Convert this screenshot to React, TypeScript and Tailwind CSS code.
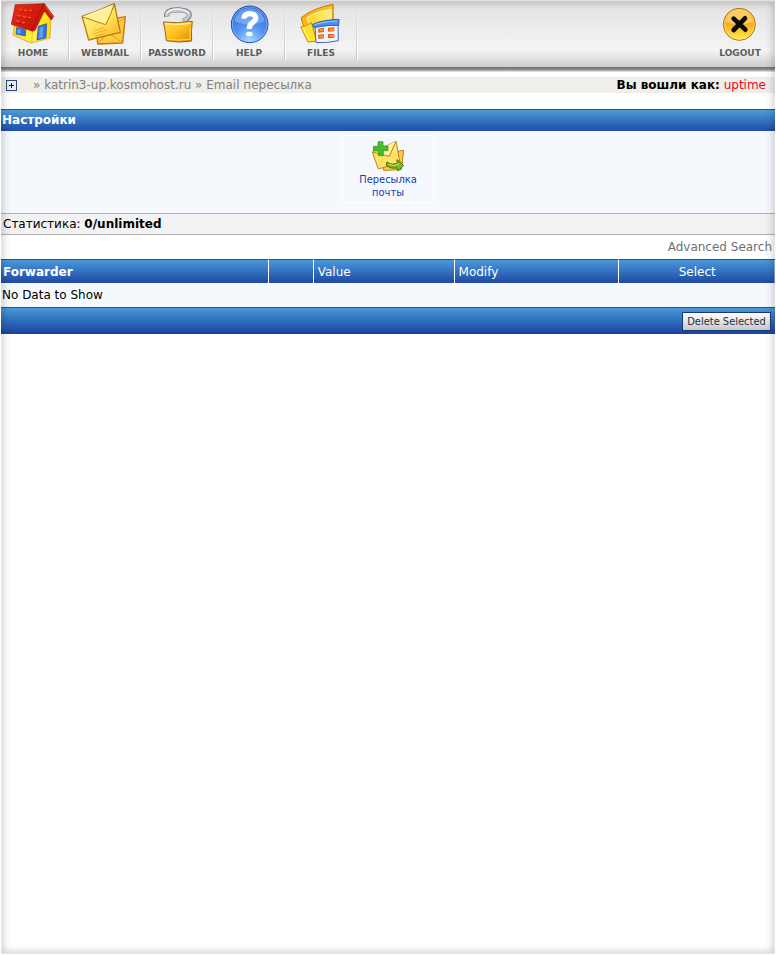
import type { ReactNode } from 'react';

function HomeIcon() {
  return (
    <svg viewBox="27 6 144 132" className="w-12 h-11" aria-hidden="true">
      <defs>
        <linearGradient id="roof" x1="0" y1="0" x2="1" y2="1">
          <stop offset="0" stopColor="#e8331a" />
          <stop offset="0.5" stopColor="#d81e0e" />
          <stop offset="1" stopColor="#b00d06" />
        </linearGradient>
        <linearGradient id="wall" x1="0" y1="0" x2="1" y2="0">
          <stop offset="0" stopColor="#ffe21a" />
          <stop offset="0.6" stopColor="#fff04a" />
          <stop offset="1" stopColor="#ffdc00" />
        </linearGradient>
      </defs>
      <path d="M44 72L39 105L93 129L150 114L152 52L133 32L98 88Z" fill="url(#wall)" stroke="#c9971a" strokeWidth="2" strokeLinejoin="round" />
      <path d="M98 92L95 127" stroke="#e8bd00" strokeWidth="2" />
      <path d="M50 82L77 89L76 108L48 102Z" fill="#2f6fe0" stroke="#2450a4" strokeWidth="2" />
      <path d="M53 86L64 89L62 102L51 99Z" fill="#5b9bf5" />
      <path d="M115 79L140 71L138 113L111 120Z" fill="#3577dc" stroke="#20499c" strokeWidth="2" />
      <path d="M119 83L130 80L128 112L117 115Z" fill="#5ea2f5" />
      <path d="M46 14L133 11L96 93L34 73Z" fill="url(#roof)" stroke="#a8140b" strokeWidth="2" strokeLinejoin="round" />
      <path d="M133 11L161 49L154 60L133 33L105 91L96 94L122 30Z" fill="#cf1b0e" stroke="#98100a" strokeWidth="2" strokeLinejoin="round" />
      <path d="M135 17L156 47" stroke="#f0573a" strokeWidth="3" />
      <path d="M55 30q6 10 14 2q5 10 14 2q5 9 14 1q5 8 13 0M48 49q7 10 16 3q6 10 16 2q6 9 15 1M43 66q8 9 17 3q7 9 16 3" fill="none" stroke="#a91008" strokeWidth="2" />
      <path d="M58 26q5 8 8 1M73 28q5 8 8 1M88 29q5 7 7 1M52 44q6 8 9 1M69 48q6 8 9 1M85 50q5 7 7 1M49 61q5 6 8 1M66 65q5 6 8 1" stroke="#f9522e" strokeWidth="4" fill="none" />
    </svg>
  );
}

function MailIcon() {
  return (
    <svg viewBox="243 6 144 132" className="w-12 h-11" aria-hidden="true">
      <defs>
        <linearGradient id="mail" x1="0" y1="0" x2="1" y2="1">
          <stop offset="0" stopColor="#fff5a0" />
          <stop offset="0.55" stopColor="#ffe358" />
          <stop offset="1" stopColor="#ffab22" />
        </linearGradient>
      </defs>
      <g stroke="#b87b0c" strokeWidth="4" strokeLinejoin="round">
        <path d="M288 73Q326 59 376 50L368 129Q328 131 293 132Z" fill="#ffc940" />
        <path d="M292 130L326 100L368 128M340 78L376 52" fill="none" stroke="#e09c24" strokeWidth="3" />
        <path d="M246 49Q294 34 343 11L361 97Q318 107 266 120Q258 88 246 49Z" fill="url(#mail)" />
        <path d="M247 50Q284 64 317 74Q333 44 343 12" fill="#fff09a" strokeWidth="3" />
        <path d="M266 118L292 68M361 96L322 67" fill="none" stroke="#f2c850" strokeWidth="2" />
      </g>
      <path d="M284 92L311 83M280 101L322 89M285 109L314 101" stroke="#f5a52d" strokeWidth="3" />
      <path d="M253 50Q296 37 337 18" stroke="#fffbd0" strokeWidth="3" fill="none" />
    </svg>
  );
}

function PasswordIcon() {
  return (
    <svg viewBox="39 6 144 132" className="w-12 h-11" aria-hidden="true">
      <defs>
        <linearGradient id="lock" x1="0" y1="0" x2="1" y2="1">
          <stop offset="0" stopColor="#ffd84c" />
          <stop offset="0.45" stopColor="#ffc424" />
          <stop offset="1" stopColor="#dc8700" />
        </linearGradient>
      </defs>
      <path d="M80 50Q77 29 112 29Q148 30 148 45Q148 53 130 64" fill="none" stroke="#77777f" strokeWidth="15" />
      <path d="M80 49Q78 30 112 30Q147 31 147 45Q146 53 130 63" fill="none" stroke="#c3c3cc" strokeWidth="11" />
      <path d="M80 42Q86 27 114 27Q141 29 147 41" fill="none" stroke="#f5f5fb" strokeWidth="4" />
      <path d="M70 66Q111 71 157 64Q153 91 155 123Q118 130 79 122Q76 91 70 66Z" fill="url(#lock)" stroke="#9d670b" strokeWidth="3" strokeLinejoin="round" />
      <path d="M75 71Q112 76 151 69" stroke="#fff1a0" strokeWidth="4" fill="none" />
      <path d="M82 117Q116 123 150 118L151 83" stroke="#ffde5c" strokeWidth="3" fill="none" />
    </svg>
  );
}

function HelpIcon() {
  return (
    <svg viewBox="255 6 144 132" className="w-12 h-11" aria-hidden="true">
      <defs>
        <radialGradient id="help" cx="0.5" cy="0.95" r="0.9">
          <stop offset="0" stopColor="#a8dcff" />
          <stop offset="0.45" stopColor="#5496f2" />
          <stop offset="1" stopColor="#2f68d8" />
        </radialGradient>
      </defs>
      <circle cx="329" cy="73" r="55" fill="url(#help)" stroke="#2449a6" strokeWidth="3" />
      <circle cx="329" cy="73" r="52" fill="none" stroke="#9cc6fa" strokeWidth="2" />
      <path d="M284 64Q290 27 329 24Q368 27 374 64Q328 82 284 64Z" fill="#9bc6fb" opacity="0.5" />
      <path d="M312 56Q312 41 330 41Q349 43 347 56Q345 63 336 69Q328 74 328 87" fill="none" stroke="#fff" strokeWidth="16" />
      <ellipse cx="328" cy="102" rx="10" ry="7" fill="#fff" />
    </svg>
  );
}

function FilesIcon() {
  return (
    <svg viewBox="51 6 144 132" className="w-12 h-11" aria-hidden="true">
      <defs>
        <linearGradient id="folder" x1="0" y1="0" x2="1" y2="1">
          <stop offset="0" stopColor="#ff9a0c" />
          <stop offset="0.5" stopColor="#ffc522" />
          <stop offset="1" stopColor="#f39a0e" />
        </linearGradient>
        <linearGradient id="sheet" x1="0" y1="0" x2="1" y2="0">
          <stop offset="0" stopColor="#ffd21f" />
          <stop offset="1" stopColor="#fff07a" />
        </linearGradient>
      </defs>
      <path d="M63 53Q99 24 159 13L160 62L109 123L84 124Z" fill="url(#folder)" stroke="#c67d0c" strokeWidth="3" strokeLinejoin="round" />
      <path d="M80 54Q107 35 153 28V67L98 94Z" fill="url(#sheet)" stroke="#fff8cf" strokeWidth="3" />
      <path d="M62 81Q81 78 94 68L110 124L84 126Z" fill="#ffe02c" stroke="#d18b0d" strokeWidth="3" strokeLinejoin="round" />
      <path d="M70 86L88 120" stroke="#fff6a0" strokeWidth="3" />
      <path d="M105 79L174 75L175 122Q144 129 108 128Z" fill="#eef4ff" stroke="#3969b9" strokeWidth="3" />
      <path d="M98 73Q129 59 177 58L176 76Q137 74 102 83Z" fill="#4b90ea" stroke="#2d61b8" strokeWidth="3" strokeLinejoin="round" />
      <path d="M103 74Q132 64 172 63" stroke="#94c8ff" strokeWidth="3" fill="none" />
      <path d="M114 86L132 83V96L115 98ZM144 83L163 82V94L144 95ZM114 104L132 103V115L115 117ZM144 102L163 102V113L144 115Z" fill="#ea5a1c" />
      <path d="M119 91L131 90M149 89H162M119 110L131 109M149 108L162 107" stroke="#ffa13a" strokeWidth="5" />
    </svg>
  );
}

function LogoutIcon() {
  return (
    <svg viewBox="78 6 144 132" className="w-12 h-11" aria-hidden="true">
      <defs>
        <linearGradient id="exit" x1="0" y1="0" x2="0" y2="1">
          <stop offset="0" stopColor="#f6a92a" />
          <stop offset="0.5" stopColor="#f8ad20" />
          <stop offset="1" stopColor="#fff04e" />
        </linearGradient>
      </defs>
      <circle cx="148" cy="73" r="48" fill="url(#exit)" stroke="#a8700e" strokeWidth="3" />
      <circle cx="148" cy="73" r="45" fill="none" stroke="#ffe58a" strokeWidth="2" />
      <path d="M108 66Q112 31 148 29Q184 31 188 66Q148 80 108 66Z" fill="#ffdf8c" opacity="0.6" />
      <path d="M131 56L166 89M165 55L131 90" stroke="#0a0a0a" strokeWidth="14" strokeLinecap="round" />
    </svg>
  );
}

function ForwardIcon() {
  return (
    <svg viewBox="109 27 102 102" className="w-[34px] h-[34px]" aria-hidden="true">
      <g stroke="#c2820f" strokeWidth="3" strokeLinejoin="round">
        <path d="M145 71L207 61L200 119L147 121Z" fill="#ffc94b" />
        <path d="M113 66L184 34L196 98L131 117Z" fill="#ffe36a" />
        <path d="M113 66L164 79L184 34" fill="#fff2a2" />
        <path d="M131 116L147 75M195 98L166 76" fill="none" stroke="#f2c850" strokeWidth="2" />
      </g>
      <path d="M130 35H145V48H160V62H146V77H131V63H116V49H130Z" fill="#48b92b" stroke="#2f8f20" strokeWidth="2" />
      <path d="M134 39H139V53H154" stroke="#66cc44" strokeWidth="2" fill="none" />
      <path d="M157 96Q174 108 188 98L187 89L207 106L190 123L188 114Q170 118 155 107Z" fill="#83ba21" stroke="#416f0a" strokeWidth="3" strokeLinejoin="round" />
      <path d="M161 103Q176 110 193 102" stroke="#c5e761" strokeWidth="3" fill="none" />
    </svg>
  );
}

function NavLink({ label, children }: { label: string; children: ReactNode }) {
  return (
    <a href="#" className="flex w-[70px] flex-col items-center pt-[2px] text-[9px] leading-[14px] font-bold text-[#5c5c5c]">
      {children}
      {label}
    </a>
  );
}

function Divider() {
  return (
    <div className="flex h-15 shrink-0">
      <div className="w-px bg-linear-to-b from-transparent to-[#c8c8c8]" />
      <div className="w-px bg-linear-to-b from-transparent to-white" />
    </div>
  );
}

const NAV = [
  { label: 'HOME', icon: <HomeIcon /> },
  { label: 'WEBMAIL', icon: <MailIcon /> },
  { label: 'PASSWORD', icon: <PasswordIcon /> },
  { label: 'HELP', icon: <HelpIcon /> },
  { label: 'FILES', icon: <FilesIcon /> },
];

export default function App() {
  return (
    <div className="relative min-h-screen bg-white px-px pb-px font-['DejaVu_Sans',Verdana,sans-serif] text-xs leading-4 text-black">
      {/* Toolbar */}
      <header className="flex h-[67px] items-start justify-between bg-linear-to-b from-[#e2e2e2] via-[#f4f4f4] via-75% to-[#cdcdcd]">
        <nav className="-ml-[3px] flex">
          {NAV.map(item => (
            <div key={item.label} className="flex">
              <NavLink label={item.label}>{item.icon}</NavLink>
              <Divider />
            </div>
          ))}
        </nav>
        <NavLink label="LOGOUT"><LogoutIcon /></NavLink>
      </header>
      <div className="h-[5px] bg-linear-to-b from-[#6e6e6e] via-[#8c8c8c] to-[#f0f0f0]" />

      {/* Breadcrumb */}
      <div className="mt-[5px] flex items-center justify-between bg-[#f0eee9] pr-[9px] pl-[5px]">
        <div className="flex items-center text-[#808080]">
          <button type="button" aria-label="Expand" className="mr-4 flex h-[11px] w-[11px] items-center justify-center border border-[#2d4775] bg-[#e4edf9]">
            <svg viewBox="0 0 7 7" className="h-[7px] w-[7px]" aria-hidden="true">
              <path d="M1 3h5v1H1zM3 1h1v5H3z" fill="#101c38" />
            </svg>
          </button>
          <span>»&nbsp;<a href="#">katrin3-up.kosmohost.ru</a> » Email пересылка</span>
        </div>
        <div><b>Вы вошли как:</b> <span className="text-[#f0001c]">uptime</span></div>
      </div>

      {/* Settings */}
      <h1 className="mt-4 h-[22px] border-y border-[#2050ac] bg-linear-to-b from-[#4d9ddb] to-[#2250a8] px-px leading-5 font-bold text-white">Настройки</h1>
      <section className="flex justify-center bg-[#f5f9fd] pt-1 pb-[10px]">
        <a href="#" className="flex w-[92px] flex-col items-center border border-white px-3 py-[3px] text-center font-['DejaVu_Sans_Condensed','Noto_Sans',sans-serif] text-[11px] leading-[13px] text-[#2038b8]">
          <ForwardIcon />
          Пересылка почты
        </a>
      </section>
      <div className="border-y border-[#b0b0b0] bg-[#f2f2f2] px-[2px] leading-5">
        Статистика: <b>0/unlimited</b>
      </div>

      <div className="px-[3px] py-1 text-right text-[#707070]">
        <a href="#">Advanced Search</a>
      </div>

      {/* Forwarders */}
      <table className="w-full table-fixed border-separate border-spacing-0 text-left">
        <colgroup>
          <col className="w-[34.6%]" />
          <col className="w-[5.8%]" />
          <col className="w-[18.2%]" />
          <col className="w-[21.3%]" />
          <col />
        </colgroup>
        <thead>
          <tr className="h-6 bg-linear-to-b from-[#4d9ddb] to-[#2148a4] text-white [&>th]:border-t [&>th]:border-t-[#2050ac]">
            <th className="border-r border-r-white px-[2px]">Forwarder</th>
            <th className="border-r border-r-white"></th>
            <th className="border-r border-r-white px-1 font-normal">Value</th>
            <th className="border-r border-r-white px-1 font-normal">Modify</th>
            <th className="text-center font-normal">Select</th>
          </tr>
        </thead>
        <tbody>
          <tr className="h-6 bg-[#f5f9fd]">
            <td colSpan={5} className="px-px">No Data to Show</td>
          </tr>
        </tbody>
        <tfoot>
          <tr className="h-[27px] bg-linear-to-b from-[#4d9ddb] to-[#1c409c]">
            <td colSpan={5} className="border-t border-[#2050ac] pr-1 text-right">
              <button type="button" className="inline-block h-[19px] w-[89px] border border-[#17377c] bg-linear-to-b from-white to-[#c8c8c8] text-center align-middle font-['DejaVu_Sans_Condensed','Noto_Sans',sans-serif] text-[11px] leading-[17px] whitespace-nowrap text-[#252f40]">
                Delete Selected
              </button>
            </td>
          </tr>
        </tfoot>
      </table>

      {/* Inner shade along the window edges */}
      <div className="pointer-events-none absolute inset-px border border-black/10 shadow-[inset_0_0_8px_rgba(0,0,0,0.25)]" />
    </div>
  );
}
